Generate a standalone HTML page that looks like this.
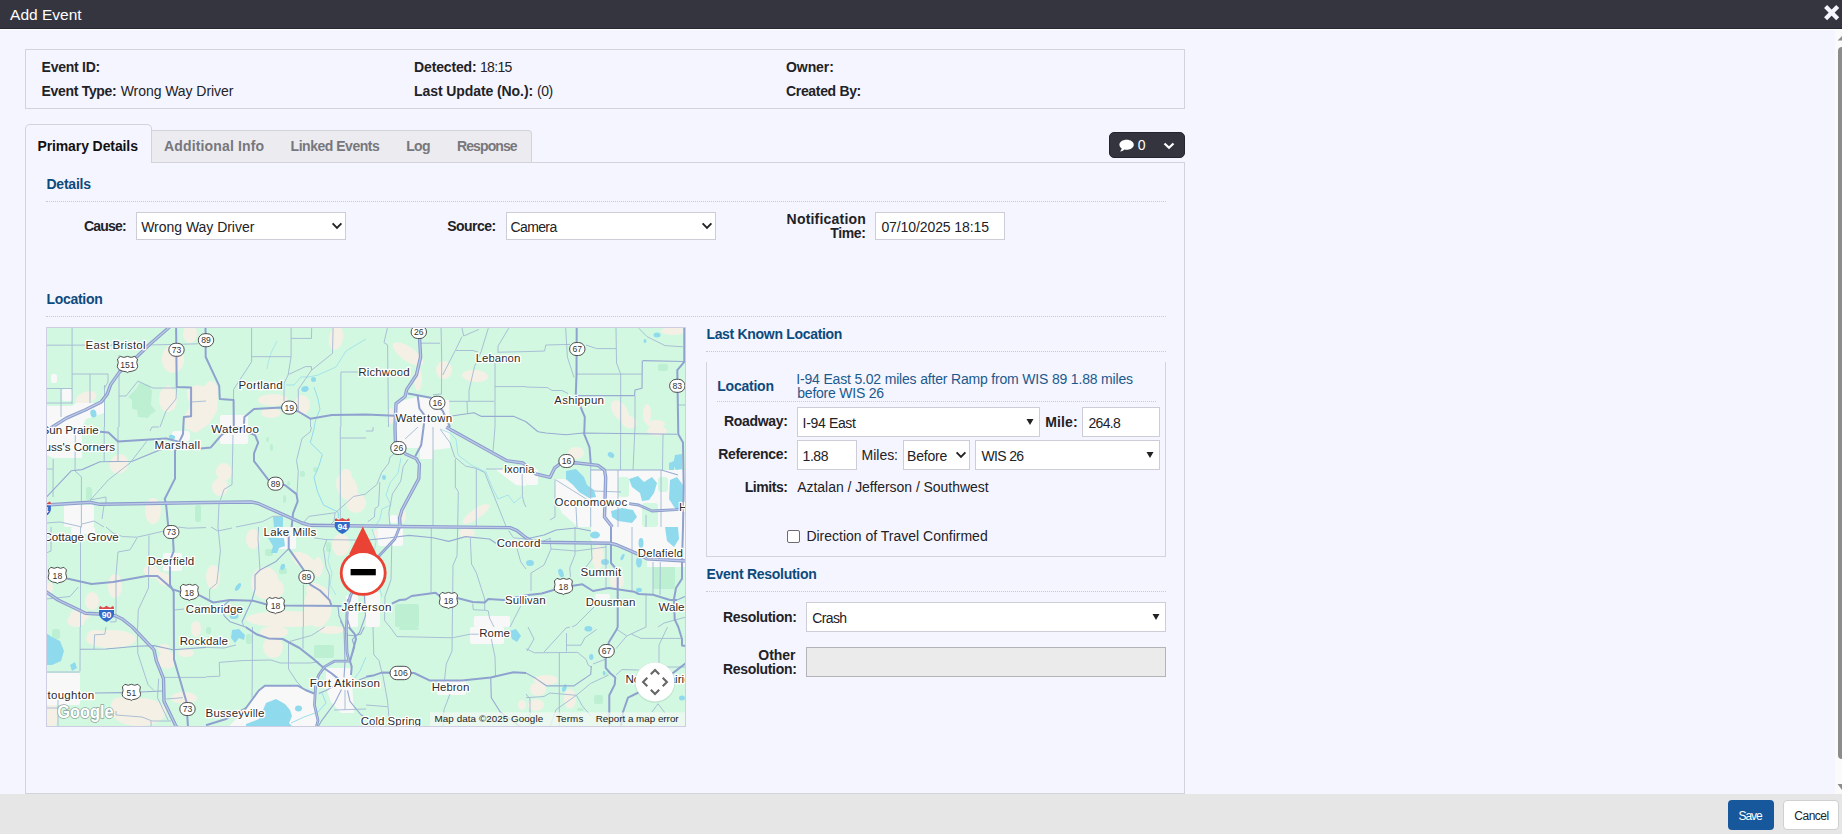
<!DOCTYPE html>
<html lang="en">
<head>
<meta charset="utf-8">
<title>Add Event</title>
<style>
html,body{margin:0;padding:0;}
body{width:1842px;height:834px;overflow:hidden;background:#f5f5ff;position:relative;
 font-family:"Liberation Sans",Arial,sans-serif;font-size:14px;color:#222226;}
*{box-sizing:border-box;}
.abs{position:absolute;}
.t{position:absolute;white-space:nowrap;line-height:16px;font-size:14px;}
.b{font-weight:bold;}
.blue{color:#0d4a7c;}
.blue2{color:#1b5a8c;}
#hdr{left:0;top:0;width:1842px;height:29px;background:#35353f;border-bottom:1px solid #282832;}
#hdrw{left:0;top:29px;width:1842px;height:1px;background:#fff;}
#title{left:10px;top:4px;font-size:16px;line-height:20px;color:#fff;}
#info{left:25px;top:49px;width:1160px;height:60px;border:1px solid #d3d3dc;}
#panel{left:25px;top:162px;width:1160px;height:632px;border:1px solid #d3d3dc;}
#tabbar{left:151px;top:130px;width:381px;height:33px;background:#ebebf0;border:1px solid #d3d3dc;border-left:none;border-radius:0 4px 0 0;}
#tabact{left:25px;top:124px;width:127px;height:39px;background:#f5f5ff;border:1px solid #d3d3dc;border-bottom:none;border-radius:5px 5px 0 0;}
.tab{color:#77777c;font-weight:bold;}
.dot{position:absolute;height:0;border-top:1px dotted #c9c9d2;}
.sel,.inp{position:absolute;background:#fff;border:1px solid #cdcdd8;}
#cbtn{left:1109px;top:132px;width:76px;height:26px;background:#34343e;border:1px solid #24242c;border-radius:5px;}
#foot{left:0;top:794px;width:1842px;height:40px;background:#e6e6e6;}
#save{left:1728px;top:800px;width:46px;height:30px;background:#17589d;border-radius:4px;}
#cancel{left:1783px;top:800px;width:56px;height:30px;background:#fff;border:1px solid #d0d0d0;border-radius:4px;}
#sbar{left:1835px;top:30px;width:7px;height:764px;background:#fafafa;}
#sthumb{left:1838px;top:47px;width:8px;height:712px;background:#8c8c8c;border-radius:4px;}
#map{left:46px;top:327px;width:640px;height:400px;overflow:hidden;background:#d3f8e2;}
#lbox{left:706px;top:362px;width:460px;height:195px;border:1px solid #d3d3dc;border-top:none;}
</style>
</head>
<body>
<div id="hdr" class="abs"></div><div id="hdrw" class="abs"></div>
<svg class="abs" style="left:1824px;top:4.6px" width="16" height="16" viewBox="0 0 16 16"><path d="M1.6 1.6 L13.7 13.7 M13.7 1.6 L1.6 13.7" stroke="#f5f5ff" stroke-width="4.3" stroke-linecap="butt"/></svg>

<div id="sbar" class="abs"></div><div id="sthumb" class="abs"></div>
<svg class="abs" style="left:1835px;top:30px" width="7" height="16" viewBox="0 0 7 16"><path d="M2.6 10.6 L7 6 L7 10.6 Z" fill="#8c8c8c"/></svg>
<svg class="abs" style="left:1835px;top:778px" width="7" height="16" viewBox="0 0 7 16"><path d="M2.6 6 L7 6 L7 12 Z" fill="#8c8c8c"/></svg>

<div id="info" class="abs"></div>

<div id="panel" class="abs"></div>
<div id="tabbar" class="abs"></div>
<div id="tabact" class="abs"></div>

<div id="cbtn" class="abs"></div>
<svg class="abs" style="left:1118px;top:139px" width="17" height="14" viewBox="0 0 17 14"><path d="M8.6 0.8 C4.5 0.8 1.4 3 1.4 5.8 C1.4 7.3 2.3 8.6 3.7 9.5 C3.5 10.6 2.8 11.7 1.8 12.6 C3.7 12.5 5.3 11.8 6.4 10.6 C7.1 10.7 7.8 10.8 8.6 10.8 C12.7 10.8 15.8 8.6 15.8 5.8 C15.8 3 12.7 0.8 8.6 0.8 Z" fill="#fff"/></svg>
<svg class="abs" style="left:1163px;top:142px" width="12" height="8" viewBox="0 0 12 8"><path d="M1.5 1.5 L6 5.8 L10.5 1.5" fill="none" stroke="#fff" stroke-width="2.2"/></svg>

<div class="dot" style="left:46px;top:201px;width:1120px"></div>

<div class="sel" style="left:136px;top:212px;width:210px;height:28px"></div>
<svg class="abs chev" style="left:331px;top:222px" width="12" height="8" viewBox="0 0 12 8"><path d="M1.6 1.4 L6 5.8 L10.4 1.4" fill="none" stroke="#222" stroke-width="1.9"/></svg>

<div class="sel" style="left:506px;top:212px;width:210px;height:28px"></div>
<svg class="abs chev" style="left:701px;top:222px" width="12" height="8" viewBox="0 0 12 8"><path d="M1.6 1.4 L6 5.8 L10.4 1.4" fill="none" stroke="#222" stroke-width="1.9"/></svg>

<div class="inp" style="left:875px;top:212px;width:130px;height:28px"></div>

<div class="dot" style="left:46px;top:316px;width:1120px"></div>

<div id="map" class="abs"><svg width="640" height="400" viewBox="0 0 640 400" style="position:absolute;left:0;top:0;font-family:'Liberation Sans',Arial,sans-serif">
<rect width="640" height="400" fill="#d3f8e2"/>
<ellipse cx="127" cy="32" rx="11" ry="14" fill="#f4f0e5"/>
<ellipse cx="122" cy="72" rx="9" ry="13" fill="#f4f0e5"/>
<ellipse cx="40" cy="71" rx="11" ry="6" fill="#f4f0e5" transform="rotate(-20 40 71)"/>
<ellipse cx="144" cy="7" rx="7" ry="9" fill="#f4f0e5"/>
<ellipse cx="290" cy="11" rx="7" ry="12" fill="#f4f0e5" transform="rotate(10 290 11)"/>
<ellipse cx="227" cy="73" rx="15" ry="6" fill="#f4f0e5"/>
<ellipse cx="256" cy="78" rx="8" ry="10" fill="#f4f0e5"/>
<ellipse cx="165" cy="64" rx="7" ry="10" fill="#f4f0e5"/>
<ellipse cx="225" cy="86" rx="10" ry="5" fill="#f4f0e5"/>
<ellipse cx="362" cy="27" rx="18" ry="7" fill="#f4f0e5" transform="rotate(35 362 27)"/>
<ellipse cx="372" cy="52" rx="4" ry="12" fill="#f4f0e5"/>
<ellipse cx="398" cy="43" rx="8" ry="9" fill="#f4f0e5"/>
<ellipse cx="429" cy="49" rx="13" ry="6" fill="#f4f0e5" transform="rotate(5 429 49)"/>
<ellipse cx="345" cy="89" rx="3" ry="8" fill="#f4f0e5"/>
<ellipse cx="574" cy="84" rx="7" ry="12" fill="#f4f0e5" transform="rotate(-35 574 84)"/>
<ellipse cx="583" cy="95" rx="8" ry="6" fill="#f4f0e5" transform="rotate(20 583 95)"/>
<ellipse cx="601" cy="87" rx="4" ry="10" fill="#f4f0e5"/>
<ellipse cx="610" cy="97" rx="9" ry="4" fill="#f4f0e5"/>
<ellipse cx="627" cy="4" rx="12" ry="4" fill="#f4f0e5"/>
<ellipse cx="73" cy="137" rx="9" ry="10" fill="#f4f0e5" transform="rotate(30 73 137)"/>
<ellipse cx="107" cy="184" rx="8" ry="13" fill="#f4f0e5"/>
<ellipse cx="178" cy="145" rx="8" ry="9" fill="#f4f0e5"/>
<ellipse cx="174" cy="160" rx="8" ry="9" fill="#f4f0e5"/>
<ellipse cx="301" cy="160" rx="10" ry="14" fill="#f4f0e5" transform="rotate(-25 301 160)"/>
<ellipse cx="310" cy="176" rx="10" ry="10" fill="#f4f0e5"/>
<ellipse cx="300" cy="150" rx="6" ry="8" fill="#f4f0e5"/>
<ellipse cx="430" cy="187" rx="16" ry="5" fill="#f4f0e5" transform="rotate(-35 430 187)"/>
<ellipse cx="356" cy="189" rx="4" ry="7" fill="#f4f0e5"/>
<ellipse cx="530" cy="126" rx="8" ry="6" fill="#f4f0e5"/>
<ellipse cx="611" cy="104" rx="10" ry="5" fill="#f4f0e5"/>
<ellipse cx="69" cy="259" rx="7" ry="12" fill="#f4f0e5"/>
<ellipse cx="106" cy="245" rx="9" ry="6" fill="#f4f0e5" transform="rotate(20 106 245)"/>
<ellipse cx="118" cy="252" rx="8" ry="6" fill="#f4f0e5" transform="rotate(40 118 252)"/>
<ellipse cx="46" cy="274" rx="7" ry="9" fill="#f4f0e5"/>
<ellipse cx="34" cy="288" rx="10" ry="6" fill="#f4f0e5"/>
<ellipse cx="30" cy="294" rx="9" ry="6" fill="#f4f0e5"/>
<ellipse cx="4" cy="261" rx="3" ry="6" fill="#f4f0e5"/>
<ellipse cx="219" cy="256" rx="14" ry="16" fill="#f4f0e5"/>
<ellipse cx="228" cy="262" rx="10" ry="10" fill="#f4f0e5"/>
<ellipse cx="207" cy="212" rx="7" ry="10" fill="#f4f0e5"/>
<ellipse cx="258" cy="234" rx="14" ry="7" fill="#f4f0e5" transform="rotate(30 258 234)"/>
<ellipse cx="272" cy="240" rx="5" ry="10" fill="#f4f0e5"/>
<ellipse cx="167" cy="250" rx="7" ry="12" fill="#f4f0e5"/>
<ellipse cx="272" cy="279" rx="14" ry="21" fill="#f4f0e5"/>
<ellipse cx="240" cy="292" rx="40" ry="8" fill="#f4f0e5"/>
<ellipse cx="295" cy="218" rx="9" ry="11" fill="#f4f0e5"/>
<ellipse cx="268" cy="262" rx="8" ry="6" fill="#f4f0e5"/>
<ellipse cx="421" cy="206" rx="8" ry="5" fill="#f4f0e5"/>
<ellipse cx="332" cy="207" rx="5" ry="5" fill="#f4f0e5"/>
<ellipse cx="552" cy="230" rx="6" ry="12" fill="#f4f0e5"/>
<ellipse cx="571" cy="254" rx="7" ry="8" fill="#f4f0e5"/>
<ellipse cx="583" cy="212" rx="5" ry="10" fill="#f4f0e5"/>
<ellipse cx="65" cy="312" rx="25" ry="9" fill="#f4f0e5"/>
<ellipse cx="50" cy="308" rx="9" ry="5" fill="#f4f0e5"/>
<ellipse cx="121" cy="333" rx="9" ry="9" fill="#f4f0e5"/>
<ellipse cx="118" cy="322" rx="6" ry="5" fill="#f4f0e5"/>
<ellipse cx="93" cy="385" rx="27" ry="14" fill="#f4f0e5"/>
<ellipse cx="75" cy="378" rx="10" ry="8" fill="#f4f0e5"/>
<ellipse cx="138" cy="371" rx="13" ry="6" fill="#f4f0e5"/>
<ellipse cx="6" cy="388" rx="6" ry="13" fill="#f4f0e5"/>
<ellipse cx="228" cy="305" rx="14" ry="6" fill="#f4f0e5"/>
<ellipse cx="227" cy="320" rx="10" ry="11" fill="#f4f0e5"/>
<ellipse cx="285" cy="303" rx="13" ry="4" fill="#f4f0e5"/>
<ellipse cx="500" cy="353" rx="12" ry="5" fill="#f4f0e5"/>
<ellipse cx="492" cy="362" rx="8" ry="7" fill="#f4f0e5"/>
<ellipse cx="524" cy="372" rx="6" ry="10" fill="#f4f0e5"/>
<ellipse cx="490" cy="378" rx="8" ry="6" fill="#f4f0e5"/>
<ellipse cx="476" cy="378" rx="4" ry="5" fill="#f4f0e5"/>
<ellipse cx="150" cy="302" rx="5" ry="8" fill="#f4f0e5"/>
<ellipse cx="140" cy="326" rx="8" ry="4" fill="#f4f0e5"/>
<path d="M141.0 63.0 L150.0 58.0 L164.0 60.0 L172.0 68.0 L171.0 84.0 L163.0 97.0 L150.0 106.0 L139.0 101.0 L138.0 90.0 L145.0 78.0 L141.0 70.0 Z" fill="#f4f0e5"/>
<path d="M82.0 70.0 L90.0 62.0 L94.0 55.0 L103.0 58.0 L106.0 64.0 L105.0 78.0 L110.0 84.0 L104.0 88.0 L102.0 91.0 L92.0 90.0 L91.0 83.0 L86.0 82.0 L86.0 73.0 Z" fill="#bdf0d3"/>
<rect x="40" y="160" width="6" height="13" rx="2" fill="#bdf0d3"/>
<rect x="149" y="178" width="6" height="17" rx="2" fill="#bdf0d3"/>
<rect x="220" y="110" width="3" height="5" rx="2" fill="#bdf0d3"/>
<rect x="224" y="117" width="3" height="7" rx="2" fill="#bdf0d3"/>
<rect x="254" y="144" width="5" height="6" rx="2" fill="#bdf0d3"/>
<rect x="267" y="140" width="5" height="5" rx="2" fill="#bdf0d3"/>
<rect x="241" y="154" width="3" height="5" rx="2" fill="#bdf0d3"/>
<rect x="237" y="168" width="3" height="8" rx="2" fill="#bdf0d3"/>
<rect x="612" y="37" width="10" height="7" rx="2" fill="#bdf0d3"/>
<rect x="605" y="170" width="7" height="10" rx="2" fill="#bdf0d3"/>
<rect x="566" y="165" width="5" height="5" rx="2" fill="#bdf0d3"/>
<rect x="219" y="222" width="8" height="7" rx="2" fill="#bdf0d3"/>
<rect x="233" y="241" width="8" height="6" rx="2" fill="#bdf0d3"/>
<rect x="280" y="215" width="5" height="10" rx="2" fill="#bdf0d3"/>
<rect x="349" y="277" width="24" height="23" rx="2" fill="#bdf0d3"/>
<rect x="607" y="234" width="22" height="28" rx="2" fill="#bdf0d3"/>
<rect x="268" y="318" width="20" height="13" rx="2" fill="#bdf0d3"/>
<rect x="200" y="307" width="6" height="10" rx="2" fill="#bdf0d3"/>
<rect x="160" y="300" width="5" height="7" rx="2" fill="#bdf0d3"/>
<rect x="548" y="368" width="9" height="9" rx="2" fill="#bdf0d3"/>
<rect x="531" y="381" width="7" height="3" rx="2" fill="#bdf0d3"/>
<rect x="557" y="345" width="5" height="4" rx="2" fill="#bdf0d3"/>
<rect x="6" y="302" width="8" height="10" rx="2" fill="#bdf0d3"/>
<rect x="360" y="73" width="7" height="4" rx="2" fill="#bdf0d3"/>
<rect x="353" y="300" width="20" height="3" rx="2" fill="#bdf0d3"/>
<path d="M0.0 79.0 L26.0 79.0 L30.0 76.0 L58.0 76.0 L58.0 86.0 L40.0 92.0 L36.0 100.0 L36.0 131.0 L8.0 131.0 L0.0 128.0 Z" fill="#f8f8f8"/>
<rect x="5" y="47" width="6" height="9" rx="2" fill="#f8f8f8"/>
<rect x="16" y="62" width="10" height="12" rx="2" fill="#f8f8f8"/>
<rect x="174" y="88" width="28" height="29" rx="2" fill="#f8f8f8"/>
<rect x="126" y="104" width="18" height="10" rx="3" fill="#f8f8f8"/>
<path d="M349.0 76.0 L370.0 70.0 L403.0 73.0 L404.0 121.0 L387.0 123.0 L387.0 132.0 L374.0 132.0 L374.0 121.0 L354.0 121.0 L349.0 110.0 Z" fill="#f8f8f8"/>
<path d="M449.0 142.0 L480.0 142.0 L480.0 159.0 L470.0 158.0 Z" fill="#f8f8f8"/>
<rect x="480" y="142" width="12" height="16" rx="2" fill="#f8f8f8"/>
<path d="M545.0 143.0 L640.0 143.0 L640.0 200.0 L545.0 200.0 Z" fill="#f8f8f8"/>
<path d="M509.0 152.0 L519.0 152.0 L545.0 170.0 L545.0 200.0 L532.0 200.0 L516.0 186.0 L509.0 172.0 Z" fill="#f8f8f8"/>
<path d="M545.0 200.0 L640.0 200.0 L640.0 240.0 L601.0 240.0 L601.0 232.0 L590.0 226.0 L572.0 218.0 L560.0 216.0 L545.0 214.0 Z" fill="#f8f8f8"/>
<rect x="18" y="178" width="30" height="22" rx="2" fill="#f8f8f8"/>
<rect x="25" y="200" width="24" height="7" rx="2" fill="#f8f8f8"/>
<rect x="117" y="226" width="19" height="18" rx="2" fill="#f8f8f8"/>
<rect x="332" y="201" width="25" height="18" rx="2" fill="#f8f8f8"/>
<rect x="320" y="265" width="14" height="35" rx="2" fill="#f8f8f8"/>
<rect x="428" y="289" width="36" height="11" rx="2" fill="#f8f8f8"/>
<rect x="424" y="300" width="34" height="17" rx="2" fill="#f8f8f8"/>
<rect x="391" y="354" width="29" height="14" rx="2" fill="#f8f8f8"/>
<rect x="0" y="346" width="34" height="32" rx="2" fill="#f8f8f8"/>
<path d="M219.0 359.0 L252.0 359.0 L268.0 367.0 L272.0 400.0 L182.0 400.0 L200.0 383.0 L213.0 364.0 Z" fill="#f8f8f8"/>
<path d="M280.0 341.0 L305.0 341.0 L308.0 386.0 L295.0 386.0 L285.0 375.0 L280.0 360.0 Z" fill="#f8f8f8"/>
<rect x="549" y="267" width="15" height="5" rx="2" fill="#f8f8f8"/>
<rect x="232" y="200" width="18" height="22" rx="2" fill="#f8f8f8"/>
<rect x="300" y="268" width="12" height="32" rx="2" fill="#f8f8f8"/>
<rect x="344" y="188" width="7" height="8" rx="2" fill="#f8f8f8"/>
<rect x="572" y="150" width="11" height="20" rx="3" fill="#d3f8e2"/>
<rect x="596" y="176" width="16" height="24" rx="3" fill="#d3f8e2"/>
<rect x="612" y="150" width="10" height="15" rx="3" fill="#d3f8e2"/>
<path d="M520.0 144.0 L530.0 142.0 L538.0 150.0 L541.0 158.0 L548.0 163.0 L550.0 170.0 L543.0 171.0 L533.0 165.0 L527.0 158.0 L520.0 152.0 Z" fill="#90daee"/>
<path d="M583.0 152.0 L592.0 149.0 L598.0 155.0 L606.0 150.0 L611.0 156.0 L608.0 166.0 L603.0 173.0 L596.0 174.0 L594.0 166.0 L586.0 160.0 Z" fill="#90daee"/>
<path d="M629.0 128.0 L636.0 127.0 L636.0 142.0 L630.0 143.0 L627.0 138.0 Z" fill="#90daee"/>
<path d="M623.0 136.0 L628.0 134.0 L628.0 143.0 L623.0 143.0 Z" fill="#90daee"/>
<path d="M624.0 153.0 L631.0 150.0 L637.0 158.0 L637.0 178.0 L630.0 183.0 L623.0 172.0 Z" fill="#90daee"/>
<path d="M565.0 184.0 L576.0 181.0 L587.0 183.0 L591.0 190.0 L586.0 196.0 L572.0 194.0 L566.0 190.0 Z" fill="#90daee"/>
<ellipse cx="565" cy="128" rx="3.5" ry="2.5" fill="#90daee" transform="rotate(30 565 128)"/>
<ellipse cx="611" cy="8" rx="3.5" ry="2.5" fill="#90daee"/>
<ellipse cx="599" cy="14" rx="1.5" ry="2" fill="#90daee"/>
<path d="M619.0 200.0 L632.0 200.0 L633.0 212.0 L628.0 220.0 L621.0 214.0 Z" fill="#90daee"/>
<ellipse cx="549" cy="208" rx="5" ry="3.5" fill="#90daee"/>
<ellipse cx="595" cy="216" rx="2.5" ry="5" fill="#90daee"/>
<ellipse cx="593" cy="235" rx="3" ry="5.5" fill="#90daee"/>
<ellipse cx="559" cy="235" rx="4" ry="3" fill="#90daee"/>
<ellipse cx="576.5" cy="230" rx="1.5" ry="3.5" fill="#90daee" transform="rotate(25 576.5 230)"/>
<ellipse cx="484" cy="236" rx="4" ry="3" fill="#90daee"/>
<ellipse cx="515" cy="246" rx="2.5" ry="4.5" fill="#90daee" transform="rotate(-20 515 246)"/>
<ellipse cx="593" cy="263" rx="3" ry="2.2" fill="#90daee"/>
<path d="M222.0 211.0 L238.0 211.0 L239.0 219.0 L233.0 221.0 L231.0 226.0 L225.0 226.0 L227.0 219.0 Z" fill="#90daee"/>
<path d="M227.0 190.0 L237.0 190.0 L237.0 200.0 L228.0 200.0 Z" fill="#90daee"/>
<ellipse cx="236.7" cy="240" rx="2.3" ry="3.2" fill="#90daee" transform="rotate(20 236.7 240)"/>
<ellipse cx="192" cy="260" rx="2" ry="4.5" fill="#90daee" transform="rotate(35 192 260)"/>
<ellipse cx="188" cy="289" rx="4.5" ry="3" fill="#90daee"/>
<ellipse cx="47.4" cy="86.5" rx="3" ry="4" fill="#90daee" transform="rotate(-15 47.4 86.5)"/>
<ellipse cx="126" cy="110" rx="3.2" ry="2" fill="#90daee" transform="rotate(20 126 110)"/>
<ellipse cx="259" cy="62" rx="3.8" ry="2.8" fill="#90daee" transform="rotate(-20 259 62)"/>
<ellipse cx="267.5" cy="52.5" rx="2.5" ry="2.5" fill="#90daee"/>
<ellipse cx="338" cy="150.5" rx="2" ry="2.4" fill="#90daee"/>
<path d="M0.0 306.0 L6.0 310.0 L14.0 314.0 L18.0 324.0 L15.0 334.0 L6.0 338.0 L0.0 338.0 Z" fill="#90daee"/>
<path d="M24.0 338.0 L29.0 335.0 L31.0 341.0 L26.0 344.0 Z" fill="#90daee"/>
<path d="M220.0 376.0 L230.0 372.0 L239.0 377.0 L244.0 383.0 L246.0 389.0 L243.0 396.0 L247.0 400.0 L200.0 400.0 L200.0 397.0 L213.0 392.0 L217.0 383.0 Z" fill="#90daee"/>
<ellipse cx="252.5" cy="381.5" rx="3.5" ry="3" fill="#90daee"/>
<path d="M186.0 303.0 L193.0 302.0 L199.0 308.0 L198.0 313.0 L193.0 311.0 L189.0 316.0 L185.0 311.0 Z" fill="#90daee"/>
<path d="M463.0 304.0 L470.0 302.0 L475.0 309.0 L471.0 315.0 L466.0 312.0 Z" fill="#90daee"/>
<ellipse cx="542.4" cy="301.8" rx="4" ry="2.8" fill="#90daee"/>
<ellipse cx="545.3" cy="330" rx="2.2" ry="3" fill="#90daee"/>
<ellipse cx="518.4" cy="361" rx="2" ry="4" fill="#90daee" transform="rotate(20 518.4 361)"/>
<ellipse cx="636" cy="371" rx="3" ry="2.5" fill="#90daee"/>
<ellipse cx="558" cy="346" rx="1.3" ry="2.2" fill="#90daee"/>
<path d="M268.5 100.0 L264.3 115.6 L276.3 127.6 L272.7 139.6 L268.0 150.4 L271.5 164.7 L277.5 178.0 L292.0 185.0 L292.5 191.0" fill="none" stroke="#90daee" stroke-width="1" stroke-linejoin="round"/>
<path d="M320.0 12.0 L300.0 24.0 L290.0 40.0 L272.0 48.0 L263.0 50.0 L255.0 50.0 L248.0 58.0 L240.0 58.0" fill="none" stroke="#90daee" stroke-width="0.7" stroke-linejoin="round"/>
<path d="M268.0 60.0 L272.0 72.0 L274.0 82.0 L270.0 92.0 L268.0 100.0" fill="none" stroke="#90daee" stroke-width="0.9" stroke-linejoin="round"/>
<path d="M231.0 14.0 L225.0 26.0 L222.0 36.0 L221.0 42.0" fill="none" stroke="#90daee" stroke-width="0.6" stroke-linejoin="round"/>
<path d="M394.0 102.0 L404.0 106.0 L410.0 112.0 L412.0 128.0 L425.0 138.0 L440.0 145.0 L446.0 160.0 L452.0 172.0 L462.0 168.0 L468.0 176.0 L475.0 170.0" fill="none" stroke="#90daee" stroke-width="0.7" stroke-linejoin="round"/>
<path d="M355.0 131.0 L352.0 146.0 L344.0 156.0 L340.0 168.0 L345.0 178.0 L336.0 182.0 L334.0 192.0 L330.0 198.0" fill="none" stroke="#90daee" stroke-width="0.7" stroke-linejoin="round"/>
<path d="M326.0 202.0 L330.0 214.0 L328.0 226.0 L324.0 240.0 L332.0 255.0 L336.0 270.0" fill="none" stroke="#90daee" stroke-width="0.7" stroke-linejoin="round"/>
<path d="M284.0 222.0 L282.0 234.0 L286.0 246.0 L284.0 258.0 L290.0 268.0" fill="none" stroke="#90daee" stroke-width="0.6" stroke-linejoin="round"/>
<path d="M320.0 330.0 L314.0 344.0 L308.0 352.0 L300.0 358.0" fill="none" stroke="#90daee" stroke-width="0.8" stroke-linejoin="round"/>
<path d="M276.0 366.0 L280.0 376.0 L272.0 385.0 L258.0 390.0 L245.0 396.0" fill="none" stroke="#90daee" stroke-width="0.9" stroke-linejoin="round"/>
<style>path.mn{fill:none;stroke:#a3b9d2;stroke-width:.9;stroke-linejoin:round}path.md{fill:none;stroke:#98abd1;stroke-width:1.15;stroke-linejoin:round}path.hw{fill:none;stroke:#8fa1ce;stroke-width:2;stroke-linejoin:round}path.fwo{fill:none;stroke:#8b9dcc;stroke-width:3.4;stroke-linejoin:round}path.f2o{fill:none;stroke:#8b9dcc;stroke-width:2.8;stroke-linejoin:round}path.f2i{fill:none;stroke:#bcc8e7;stroke-width:.9;stroke-linejoin:round}path.fwi{fill:none;stroke:#bcc8e7;stroke-width:1.3;stroke-linejoin:round}text.lb{font-size:11.6px;fill:#2b2b2b;stroke:#fff;stroke-width:2.6px;stroke-linejoin:round;paint-order:stroke fill}text.sh{font-size:8.6px;fill:#333;text-anchor:middle}</style>
<path d="M0.0 18.2 L100.0 18.0 L130.0 17.4 L152.0 16.8" class="mn"/>
<path d="M26.1 0.0 L26.1 77.0" class="mn"/>
<path d="M26.0 47.0 L62.0 47.0 L62.0 55.0 L58.0 62.0" class="mn"/>
<path d="M44.0 47.0 L44.0 76.0" class="mn"/>
<path d="M0.0 61.5 L26.0 61.5" class="mn"/>
<path d="M15.0 61.5 L15.0 90.0" class="mn"/>
<path d="M0.0 76.0 L26.0 76.0" class="mn"/>
<path d="M73.0 28.0 L73.0 100.0" class="mn"/>
<path d="M58.5 58.0 L58.5 100.0" class="mn"/>
<path d="M73.0 69.0 L80.0 69.0 L92.0 54.0 L100.0 58.0 L107.0 61.0 L130.0 61.0" class="mn"/>
<path d="M130.7 60.0 L130.0 72.0 L120.0 84.0 L114.0 100.0" class="mn"/>
<path d="M145.0 75.0 L160.0 74.0" class="mn"/>
<path d="M205.6 0.0 L205.6 34.8 L187.6 62.4 L187.5 72.0" class="mn"/>
<path d="M205.6 29.7 L245.0 29.7" class="mn"/>
<path d="M245.1 0.0 L245.1 29.7 L242.1 48.0 L238.0 56.4 L238.0 74.3" class="mn"/>
<path d="M245.1 11.4 L265.5 11.4 L265.7 0.0" class="mn"/>
<path d="M287.1 0.0 L286.5 26.4 L265.5 43.2 L252.3 62.4 L252.3 84.0" class="mn"/>
<path d="M242.7 47.4 L259.5 39.6 L265.5 39.6 L265.5 43.2" class="mn"/>
<path d="M294.9 100.0 L294.9 45.0 L320.0 45.0" class="mn"/>
<path d="M264.5 92.0 L264.5 100.0" class="mn"/>
<path d="M341.6 0.0 L338.0 15.6 L341.6 18.0 L342.5 100.0" class="mn"/>
<path d="M395.0 0.0 L395.7 30.0 L395.5 67.0 L387.0 67.7" class="mn"/>
<path d="M374.0 16.2 L394.0 16.2" class="mn"/>
<path d="M442.3 1.2 L435.0 25.0 L428.5 39.6 L423.0 63.5 L423.0 74.3" class="mn"/>
<path d="M416.0 9.6 L410.0 22.0 L396.7 48.0" class="mn"/>
<path d="M410.0 23.5 L427.0 23.5 L432.0 25.0" class="mn"/>
<path d="M403.0 74.3 L448.0 74.3" class="mn"/>
<path d="M449.0 100.0 L449.0 36.0 L450.0 30.0" class="mn"/>
<path d="M449.0 59.6 L480.0 59.6" class="mn"/>
<path d="M421.0 74.3 L421.5 86.5" class="mn"/>
<path d="M462.7 1.2 L452.0 19.2 L452.0 25.8" class="mn"/>
<path d="M452.0 25.2 L480.0 24.6" class="mn"/>
<path d="M416.0 1.0 L417.7 9.0 L432.7 2.4" class="mn"/>
<path d="M480.0 24.6 L498.6 24.0 L499.8 18.0 L524.0 17.4" class="mn"/>
<path d="M540.0 18.0 L550.7 21.6 L570.0 21.6" class="mn"/>
<path d="M480.0 60.0 L501.6 60.6 L506.0 63.5 L516.0 63.5 L522.0 66.5" class="mn"/>
<path d="M519.6 0.0 L521.4 30.0 L528.0 50.4" class="mn"/>
<path d="M531.0 47.1 L596.0 47.1" class="mn"/>
<path d="M574.7 47.0 L574.7 100.0" class="mn"/>
<path d="M570.0 1.0 L570.5 36.0 L574.7 47.0" class="mn"/>
<path d="M589.0 68.6 L589.0 100.0" class="mn"/>
<path d="M592.7 1.2 L601.0 9.6 L619.0 18.6 L637.0 19.8" class="mn"/>
<path d="M632.0 78.0 L640.0 78.0" class="mn"/>
<path d="M44.4 173.0 L62.4 152.8 L84.0 136.0 L100.7 114.4" class="mn"/>
<path d="M29.4 100.0 L29.0 144.0 L35.4 149.8 L35.4 200.0" class="mn"/>
<path d="M72.0 100.0 L72.0 134.0" class="mn"/>
<path d="M58.2 100.0 L58.2 134.0" class="mn"/>
<path d="M7.2 132.0 L7.0 170.0" class="mn"/>
<path d="M0.0 142.0 L7.0 142.0" class="mn"/>
<path d="M104.0 104.0 L106.0 100.0 L113.0 100.0" class="mn"/>
<path d="M44.0 173.0 L60.0 170.0 L60.0 178.0" class="mn"/>
<path d="M0.0 196.0 L14.0 195.0 L36.0 200.0" class="mn"/>
<path d="M36.0 197.0 L48.0 194.0 L58.0 200.0" class="mn"/>
<path d="M58.0 178.0 L56.0 192.0" class="mn"/>
<path d="M187.0 108.0 L186.0 157.6 L178.0 162.4 L174.4 173.0" class="mn"/>
<path d="M294.3 100.0 L294.3 195.0" class="mn"/>
<path d="M294.3 111.0 L320.0 111.0" class="mn"/>
<path d="M265.5 100.0 L264.3 104.8 L256.0 111.4 L250.5 133.6 L252.3 144.4 L251.0 167.0" class="mn"/>
<path d="M258.3 194.7 L263.0 189.3 L289.5 185.7 L307.5 169.5 L320.0 167.0" class="mn"/>
<path d="M172.0 200.0 L173.0 176.7" class="mn"/>
<path d="M190.0 200.0 L216.4 194.7 L227.0 189.3 L236.7 189.3" class="mn"/>
<path d="M289.0 186.0 L288.0 194.0 L284.0 198.0" class="mn"/>
<path d="M387.0 100.0 L387.0 200.0" class="mn"/>
<path d="M409.3 131.8 L409.3 160.0 L412.3 164.7 L411.7 200.0" class="mn"/>
<path d="M430.3 142.0 L430.3 200.0" class="mn"/>
<path d="M394.3 102.4 L404.0 115.6 L408.7 130.0 L419.5 139.0 L430.3 141.4 L438.7 145.6 L460.3 200.0" class="mn"/>
<path d="M440.0 142.0 L456.7 142.0" class="mn"/>
<path d="M449.0 100.0 L447.0 124.0" class="mn"/>
<path d="M320.0 166.5 L330.8 157.6 L335.6 145.6 L342.8 136.0 L344.0 130.0 L348.0 127.0" class="mn"/>
<path d="M362.0 132.4 L357.2 139.6 L354.8 154.0 L346.4 167.0 L342.8 186.3 L344.0 198.3" class="mn"/>
<path d="M333.8 155.0 L332.6 179.0 L329.0 181.5 L328.4 190.0 L321.8 194.7" class="mn"/>
<path d="M320.0 104.0 L327.0 104.0 L327.0 100.0" class="mn"/>
<path d="M359.0 112.0 L372.0 100.0" class="mn"/>
<path d="M476.0 168.0 L478.0 176.0 L480.0 180.0" class="mn"/>
<path d="M476.0 142.0 L476.5 168.0" class="mn"/>
<path d="M574.7 100.0 L574.5 143.0" class="mn"/>
<path d="M589.0 100.0 L587.0 143.0" class="mn"/>
<path d="M617.0 107.0 L616.5 143.0" class="mn"/>
<path d="M544.7 136.0 L544.7 200.0" class="mn"/>
<path d="M572.0 143.0 L572.0 200.0" class="mn"/>
<path d="M509.0 152.0 L509.0 190.0 L504.0 193.0" class="mn"/>
<path d="M510.0 153.0 L545.0 175.0" class="mn"/>
<path d="M548.0 164.0 L575.0 165.0" class="mn"/>
<path d="M615.0 143.0 L615.0 200.0" class="mn"/>
<path d="M600.0 188.0 L600.0 200.0" class="mn"/>
<path d="M530.0 180.0 L531.0 200.0" class="mn"/>
<path d="M34.5 200.0 L34.5 300.0" class="mn"/>
<path d="M60.0 200.0 L67.0 206.0 L76.7 209.6 L91.0 210.2 L117.5 204.2" class="mn"/>
<path d="M91.1 210.8 L84.0 222.8 L72.0 225.0 L70.0 248.0 L70.0 294.7 L64.0 295.0" class="mn"/>
<path d="M103.0 208.4 L102.5 261.0 L92.3 282.7 L91.7 300.0" class="mn"/>
<path d="M0.0 272.0 L24.0 269.5 L32.4 260.0" class="mn"/>
<path d="M132.0 200.0 L141.5 201.2 L160.0 200.6" class="mn"/>
<path d="M0.0 226.0 L5.0 224.0 L5.0 200.0" class="mn"/>
<path d="M128.0 283.0 L138.0 282.0" class="mn"/>
<path d="M212.5 200.0 L212.0 212.0 L214.0 243.0" class="mn"/>
<path d="M172.0 200.0 L174.4 224.0 L170.8 256.4 L163.6 262.4 L163.6 272.0" class="mn"/>
<path d="M257.4 257.6 L257.4 300.0" class="mn"/>
<path d="M281.0 212.0 L277.5 221.6 L280.0 239.6 L283.5 248.0 L282.3 272.0" class="mn"/>
<path d="M268.0 210.8 L280.0 212.6 L320.0 213.2" class="mn"/>
<path d="M165.0 200.0 L172.0 204.0 L186.0 201.0" class="mn"/>
<path d="M196.0 294.7 L198.0 300.0" class="mn"/>
<path d="M385.3 200.0 L385.0 265.4" class="mn"/>
<path d="M411.7 200.0 L411.0 228.8 L407.0 238.4 L406.3 300.0" class="mn"/>
<path d="M424.3 210.8 L425.5 237.0 L430.3 245.6 L438.7 272.0 L438.7 283.0 L442.3 284.0 L443.5 291.0 L448.0 300.0" class="mn"/>
<path d="M345.8 215.6 L345.0 252.8 L339.0 269.5 L338.6 293.5 L344.0 300.0" class="mn"/>
<path d="M471.0 221.6 L474.7 234.8 L480.0 242.0" class="mn"/>
<path d="M426.7 276.7 L427.3 282.7 L438.7 283.3" class="mn"/>
<path d="M462.7 203.6 L467.5 210.8 L480.0 212.0" class="mn"/>
<path d="M474.7 279.0 L464.0 300.0" class="mn"/>
<path d="M480.0 221.0 L505.0 211.0" class="mn"/>
<path d="M504.0 212.0 L505.0 222.0 L498.0 238.0 L485.0 246.0 L485.0 264.0" class="mn"/>
<path d="M529.0 200.0 L529.0 227.6 L523.8 240.8 L524.5 250.0" class="mn"/>
<path d="M586.0 200.0 L586.0 264.0" class="mn"/>
<path d="M600.0 268.0 L600.0 300.0" class="mn"/>
<path d="M607.0 235.0 L607.0 267.0" class="mn"/>
<path d="M614.3 235.0 L614.0 268.0" class="mn"/>
<path d="M505.0 222.0 L530.0 224.0 L560.0 220.0" class="mn"/>
<path d="M548.0 280.0 L530.0 298.0 L526.0 300.0" class="mn"/>
<path d="M640.0 290.0 L618.0 296.0 L612.0 300.0" class="mn"/>
<path d="M34.2 300.0 L34.0 344.4" class="mn"/>
<path d="M0.0 345.0 L33.6 345.0" class="mn"/>
<path d="M48.0 322.2 L48.6 307.8 L58.8 307.2 L60.0 300.0" class="mn"/>
<path d="M91.4 300.0 L91.8 326.4 L102.0 357.6 L108.0 363.6" class="mn"/>
<path d="M118.7 350.4 L160.0 350.4" class="mn"/>
<path d="M12.0 373.0 L12.0 400.0" class="mn"/>
<path d="M112.7 351.6 L111.5 370.7 L122.3 393.5" class="mn"/>
<path d="M120.0 372.0 L136.7 370.7" class="mn"/>
<path d="M70.0 384.0 L70.0 388.0 L96.0 390.0 L106.0 394.0 L125.0 394.0" class="mn"/>
<path d="M105.0 394.0 L105.0 400.0" class="mn"/>
<path d="M0.0 381.0 L12.0 381.0" class="mn"/>
<path d="M206.5 300.0 L206.2 358.8 L206.0 370.7" class="mn"/>
<path d="M160.0 349.8 L173.8 349.2 L173.2 335.4 L196.0 333.6 L224.7 333.0 L234.3 336.0 L264.3 336.0 L272.7 334.8" class="mn"/>
<path d="M242.5 315.6 L242.5 342.0 L251.0 355.0 L256.0 360.0" class="mn"/>
<path d="M257.0 300.0 L257.0 321.6" class="mn"/>
<path d="M244.0 314.4 L265.5 308.4 L278.7 300.0" class="mn"/>
<path d="M160.0 320.4 L178.0 321.0 L190.0 318.0" class="mn"/>
<path d="M299.0 363.0 L299.0 383.0" class="mn"/>
<path d="M288.0 383.0 L320.0 382.0" class="mn"/>
<path d="M327.0 300.0 L327.8 327.6 L333.0 333.6 L335.6 344.4 L336.8 348.0 L341.6 374.3 L342.8 388.7 L343.0 400.0" class="mn"/>
<path d="M344.0 300.0 L351.0 309.6 L406.3 310.8 L424.3 307.2 L432.7 307.2" class="mn"/>
<path d="M406.3 300.0 L406.0 324.0 L400.3 337.0 L398.5 352.8" class="mn"/>
<path d="M404.0 367.0 L398.0 382.7 L397.0 400.0" class="mn"/>
<path d="M445.3 312.0 L449.0 330.0 L449.5 349.0" class="mn"/>
<path d="M320.0 378.0 L341.6 379.7" class="mn"/>
<path d="M480.0 321.6 L488.4 325.8 L531.6 325.4 L540.0 332.4 L542.4 338.4 L546.0 340.0" class="mn"/>
<path d="M513.3 325.8 L513.3 400.0" class="mn"/>
<path d="M520.5 306.0 L520.5 324.6" class="mn"/>
<path d="M520.5 318.2 L535.0 318.2 L538.8 310.8 L550.7 302.4" class="mn"/>
<path d="M498.0 325.0 L520.0 301.0 L524.0 300.0" class="mn"/>
<path d="M480.0 370.7 L498.0 369.5 L504.0 366.0 L530.4 368.3 L544.7 356.4 L562.7 348.0" class="mn"/>
<path d="M504.0 400.0 L510.0 382.7 L530.4 368.3 L536.4 379.0 L544.7 388.7" class="mn"/>
<path d="M547.0 337.0 L559.0 332.4" class="mn"/>
<path d="M571.0 302.4 L580.7 309.0 L600.0 300.0" class="mn"/>
<path d="M580.7 309.0 L570.0 321.6" class="mn"/>
<path d="M585.5 307.2 L595.0 311.4 L636.0 311.4" class="mn"/>
<path d="M621.5 300.0 L613.0 318.0 L613.0 336.0" class="mn"/>
<path d="M576.0 342.6 L592.7 343.0" class="mn"/>
<path d="M576.0 342.6 L570.0 348.0" class="mn"/>
<path d="M612.0 376.7 L606.0 385.0" class="mn"/>
<path d="M612.0 376.7 L619.0 386.0" class="mn"/>
<path d="M482.0 300.0 L488.0 312.0 L481.0 324.0" class="mn"/>
<path d="M480.0 367.0 L484.0 372.0 L484.0 400.0" class="mn"/>
<path d="M613.0 340.0 L640.0 340.0" class="mn"/>
<path d="M560.0 216.0 L560.0 262.0" class="mn"/>
<path d="M545.0 214.0 L546.0 232.0 L540.0 240.0" class="mn"/>
<path d="M318.3 267.0 L319.5 288.7 L313.5 305.5 L306.3 312.7 L308.7 320.0 L303.9 334.3" class="md"/>
<path d="M294.3 293.5 L301.5 308.0 L310.0 309.0" class="md"/>
<path d="M404.0 89.3 L428.0 85.7 L435.0 89.3 L467.5 89.3 L480.0 94.7 L492.0 104.8" class="md"/>
<path d="M480.0 346.0 L490.0 351.6 L500.4 358.8 L528.0 358.8 L544.7 347.4 L545.3 339.0" class="md"/>
<path d="M0.0 170.7 L25.2 143.8 L36.0 142.6 L54.0 134.8 L86.3 134.2 L112.7 123.4 L127.0 120.0" class="md"/>
<path d="M492.0 104.8 L500.0 106.0 L520.0 107.8 L537.0 106.0 L631.0 107.2" class="md"/>
<path d="M544.7 143.0 L615.5 143.0 L632.0 148.0" class="md"/>
<path d="M320.0 213.2 L344.0 210.8 L363.0 208.4 L387.0 210.8 L402.7 214.4 L419.5 209.6 L443.5 212.0 L450.7 216.8" class="md"/>
<path d="M480.0 212.0 L498.0 208.0 L510.0 203.0 L530.0 201.0 L545.0 204.0" class="md"/>
<path d="M34.2 322.2 L60.0 322.0 L91.0 319.2 L108.0 318.6 L127.0 322.8 L160.0 320.4" class="md"/>
<path d="M597.0 33.6 L638.0 34.5" class="md"/>
<path d="M596.3 33.6 L596.0 61.2 L589.0 63.0 L588.5 68.6" class="md"/>
<path d="M531.6 68.6 L588.5 68.6" class="md"/>
<path d="M242.7 221.6 L229.5 234.8 L214.0 243.0 L209.0 248.0 L209.0 262.4 L206.0 273.0 L196.0 294.7" class="md"/>
<path d="M178.0 288.7 L184.0 294.7 L199.6 300.0" class="md"/>
<path d="M178.0 288.7 L176.0 280.0 L184.0 273.0" class="md"/>
<path d="M292.0 279.0 L293.0 288.7 L298.0 300.0" class="md"/>
<path d="M301.5 272.0 L300.3 288.7 L304.0 300.0" class="md"/>
<path d="M305.7 267.0 L304.0 275.0" class="md"/>
<path d="M49.0 366.0 L76.7 365.6" class="md"/>
<path d="M94.7 365.0 L116.3 364.0" class="md"/>
<path d="M295.5 362.4 L288.3 376.7 L275.0 394.7 L272.0 400.0" class="md"/>
<path d="M301.5 363.5 L304.0 374.3 L314.7 387.5 L320.0 391.0 L330.0 396.0" class="md"/>
<path d="M320.0 350.4 L313.5 352.8 L306.0 358.0" class="md"/>
<path d="M272.7 366.5 L280.0 363.5 L290.0 358.0" class="md"/>
<path d="M298.0 300.0 L299.0 334.8 L298.0 350.4" class="md"/>
<path d="M308.7 308.4 L314.7 307.2 L318.3 300.0" class="md"/>
<path d="M444.7 350.4 L445.3 370.7 L454.3 385.0 L474.7 400.0" class="md"/>
<path d="M630.0 182.7 L640.0 181.0" class="md"/>
<path d="M631.0 273.0 L640.0 269.0" class="md"/>
<path d="M130.1 0.0 L130.7 60.0 L145.1 60.6 L145.1 89.3 L137.9 89.9 L137.3 100.0 L137.0 107.0 L129.0 124.0 L129.0 151.6 L118.7 172.0 L120.0 176.7 L122.3 200.0" class="hw"/>
<path d="M159.5 0.0 L159.7 30.0 L173.2 58.8 L173.8 72.0 L187.6 72.9 L187.8 100.0 L209.0 108.0 L212.2 115.6 L208.0 126.4 L208.0 134.2 L222.4 152.8 L239.1 158.2 L250.5 167.1 L251.7 174.3 L247.0 186.3 L245.7 200.0" class="hw"/>
<path d="M54.0 104.8 L62.4 105.4 L72.0 114.4 L120.0 111.4 L127.0 113.2 L137.0 116.0 L154.7 121.6 L164.8 120.4 L175.6 107.8 L187.8 100.0" class="hw"/>
<path d="M187.8 100.0 L197.8 100.0 L198.4 90.0 L208.0 82.1 L235.5 80.6 L252.3 84.5 L264.3 91.7 L285.9 88.1 L320.0 87.5 L348.8 88.7" class="hw"/>
<path d="M362.0 66.5 L371.6 68.3 L384.7 70.7 L396.7 83.9 L404.0 100.0" class="hw"/>
<path d="M371.6 68.3 L373.4 81.5 L378.8 88.7 L377.6 100.0 L375.2 118.0 L369.2 129.4" class="hw"/>
<path d="M530.7 0.0 L530.5 48.0 L529.8 67.0 L535.2 81.5 L538.8 90.0 L538.2 107.2 L543.5 120.4 L544.7 136.0" class="hw"/>
<path d="M638.3 0.0 L638.3 34.8 L631.3 43.2 L632.3 107.2 L637.0 115.6 L637.7 160.0 L637.0 200.0 L636.0 234.8 L636.0 251.6 L630.0 261.0 L628.0 272.0 L628.7 292.3 L632.3 300.0 L636.0 312.0 L636.0 318.6 L640.0 319.0" class="hw"/>
<path d="M125.3 205.0 L127.0 212.0 L127.7 224.0 L124.0 233.6 L124.0 257.6 L127.7 264.7 L128.0 332.4 L140.3 374.3 L142.0 400.0" class="hw"/>
<path d="M21.0 251.6 L45.6 257.0 L67.0 255.0 L100.7 249.0 L111.5 249.0 L127.0 262.4 L134.3 264.7 L153.5 268.3 L167.2 275.5 L184.0 273.0 L206.8 273.7 L220.0 277.3 L239.0 278.5 L295.5 279.0" class="hw"/>
<path d="M242.7 204.0 L242.7 221.6 L257.1 242.0 L264.3 257.6 L274.0 263.5 L283.5 273.0 L285.3 278.0" class="hw"/>
<path d="M345.8 276.7 L353.6 273.0 L359.6 272.5 L365.6 269.0 L389.5 265.7 L394.3 269.5 L412.3 271.3 L426.7 275.0 L438.7 275.5 L442.3 272.0 L457.9 273.0 L480.0 268.3 L495.6 266.5 L507.6 263.0 L526.8 258.8 L536.4 257.3 L547.0 264.0 L562.7 261.0 L588.0 264.7 L592.7 267.0 L607.0 267.7 L624.0 273.0 L631.0 273.0" class="hw"/>
<path d="M565.0 200.0 L565.0 236.0 L571.0 243.0 L571.7 250.4 L571.7 300.0 L570.0 303.6 L562.7 315.6 L559.7 331.0 L559.7 340.8 L564.0 346.0 L569.3 350.4 L568.7 357.6 L563.3 368.3 L563.3 400.0" class="hw"/>
<path d="M199.6 300.0 L210.4 307.2 L222.4 311.4 L236.7 312.0 L253.5 321.0 L268.0 332.4 L277.5 340.8 L286.0 346.8 L292.0 351.6" class="hw"/>
<path d="M160.0 398.3 L179.2 392.3 L199.6 381.5 L212.8 363.5 L218.8 358.8 L252.3 358.8 L259.5 363.0 L268.0 366.5" class="hw"/>
<path d="M304.0 334.2 L305.7 339.6 L305.0 348.0" class="hw"/>
<path d="M304.0 334.2 L310.0 312.0 L308.7 307.2 L302.7 300.0" class="hw"/>
<path d="M320.0 349.8 L327.0 348.6 L335.6 345.6 L368.0 346.0 L383.5 353.4 L416.0 353.4 L444.7 350.4 L467.5 345.3 L480.0 346.0" class="hw"/>
<path d="M640.0 336.0 L627.5 345.6 L591.5 366.0 L582.0 370.7 L577.0 385.0 L575.0 400.0" class="hw"/>
<path d="M583.0 176.7 L592.7 178.0 L606.0 184.0 L630.0 182.7 L640.0 181.0" class="f2o"/>
<path d="M353.6 200.0 L348.8 212.0 L333.2 228.8 L322.0 238.0 L310.0 258.0 L304.0 269.5 L301.5 279.0 L300.3 303.0 L301.0 325.0 L303.0 334.2 L288.3 334.2 L278.7 339.6 L272.7 348.0 L269.7 356.4 L268.5 378.0 L272.0 393.5 L270.3 400.0" class="f2o"/>
<path d="M583.0 176.7 L592.7 178.0 L606.0 184.0 L630.0 182.7 L640.0 181.0" class="f2i"/>
<path d="M353.6 200.0 L348.8 212.0 L333.2 228.8 L322.0 238.0 L310.0 258.0 L304.0 269.5 L301.5 279.0 L300.3 303.0 L301.0 325.0 L303.0 334.2 L288.3 334.2 L278.7 339.6 L272.7 348.0 L269.7 356.4 L268.5 378.0 L272.0 393.5 L270.3 400.0" class="f2i"/>
<path d="M123.5 0.0 L104.3 16.8 L91.1 29.4 L73.1 45.6 L64.7 57.6 L61.2 67.1 L55.2 74.9 L39.6 82.7 L20.4 91.1 L7.2 99.5 L0.0 104.0" class="fwo"/>
<path d="M0.0 178.0 L44.4 175.3 L54.0 177.3 L160.0 175.5 L205.6 175.0 L212.8 176.7 L256.0 196.0 L264.3 198.3 L320.0 199.0 L354.0 199.5 L464.0 200.6 L471.0 203.6 L480.0 210.8 L486.0 214.0 L495.6 215.3 L564.0 216.2 L571.0 218.0 L590.3 226.4 L601.0 231.8 L640.0 234.0" class="fwo"/>
<path d="M0.0 264.7 L12.0 273.0 L39.6 286.3 L52.8 287.0 L69.5 288.7 L76.7 292.3 L86.3 300.0 L108.0 322.8 L110.3 333.6 L117.5 351.6 L118.0 374.3 L129.5 398.3 L131.0 400.0" class="fwo"/>
<path d="M373.6 0.0 L373.6 12.0 L374.6 30.0 L370.4 48.0 L360.8 62.4 L359.0 69.5 L350.0 76.7 L349.0 100.0 L349.4 114.4 L359.6 127.0 L370.4 131.8 L373.4 137.2 L372.8 151.6 L356.0 182.7 L353.6 191.0 L354.0 199.0" class="fwo"/>
<path d="M400.3 100.0 L406.3 103.6 L460.3 133.6 L477.0 136.0 L489.6 146.8 L504.0 150.4 L508.8 140.8 L513.6 137.2 L529.2 135.7 L552.0 138.4 L558.5 143.2 L559.7 150.4 L558.5 190.0 L566.3 200.0" class="fwo"/>
<path d="M123.5 0.0 L104.3 16.8 L91.1 29.4 L73.1 45.6 L64.7 57.6 L61.2 67.1 L55.2 74.9 L39.6 82.7 L20.4 91.1 L7.2 99.5 L0.0 104.0" class="fwi"/>
<path d="M0.0 178.0 L44.4 175.3 L54.0 177.3 L160.0 175.5 L205.6 175.0 L212.8 176.7 L256.0 196.0 L264.3 198.3 L320.0 199.0 L354.0 199.5 L464.0 200.6 L471.0 203.6 L480.0 210.8 L486.0 214.0 L495.6 215.3 L564.0 216.2 L571.0 218.0 L590.3 226.4 L601.0 231.8 L640.0 234.0" class="fwi"/>
<path d="M0.0 264.7 L12.0 273.0 L39.6 286.3 L52.8 287.0 L69.5 288.7 L76.7 292.3 L86.3 300.0 L108.0 322.8 L110.3 333.6 L117.5 351.6 L118.0 374.3 L129.5 398.3 L131.0 400.0" class="fwi"/>
<path d="M373.6 0.0 L373.6 12.0 L374.6 30.0 L370.4 48.0 L360.8 62.4 L359.0 69.5 L350.0 76.7 L349.0 100.0 L349.4 114.4 L359.6 127.0 L370.4 131.8 L373.4 137.2 L372.8 151.6 L356.0 182.7 L353.6 191.0 L354.0 199.0" class="fwi"/>
<path d="M400.3 100.0 L406.3 103.6 L460.3 133.6 L477.0 136.0 L489.6 146.8 L504.0 150.4 L508.8 140.8 L513.6 137.2 L529.2 135.7 L552.0 138.4 L558.5 143.2 L559.7 150.4 L558.5 190.0 L566.3 200.0" class="fwi"/>
<rect x="122.8" y="16.3" width="15.4" height="13" rx="6.5" fill="#fff" stroke="#3c3c3c" stroke-width="0.9"/>
<text class="sh" x="130.5" y="25.9">73</text>
<rect x="152.3" y="6.7" width="15.4" height="13" rx="6.5" fill="#fff" stroke="#3c3c3c" stroke-width="0.9"/>
<text class="sh" x="160" y="16.3">89</text>
<rect x="235.6" y="74.1" width="15.4" height="13" rx="6.5" fill="#fff" stroke="#3c3c3c" stroke-width="0.9"/>
<text class="sh" x="243.3" y="83.7">19</text>
<rect x="365.1" y="-1.5" width="15.4" height="13" rx="6.5" fill="#fff" stroke="#3c3c3c" stroke-width="0.9"/>
<text class="sh" x="372.8" y="8.1">26</text>
<rect x="383.6" y="69.3" width="15.4" height="13" rx="6.5" fill="#fff" stroke="#3c3c3c" stroke-width="0.9"/>
<text class="sh" x="391.3" y="78.9">16</text>
<rect x="523.6" y="15.5" width="15.4" height="13" rx="6.5" fill="#fff" stroke="#3c3c3c" stroke-width="0.9"/>
<text class="sh" x="531.3" y="25.1">67</text>
<rect x="623.6" y="52.3" width="15.4" height="13" rx="6.5" fill="#fff" stroke="#3c3c3c" stroke-width="0.9"/>
<text class="sh" x="631.3" y="61.9">83</text>
<rect x="221.8" y="150.2" width="15.4" height="13" rx="6.5" fill="#fff" stroke="#3c3c3c" stroke-width="0.9"/>
<text class="sh" x="229.5" y="159.8">89</text>
<rect x="344.7" y="114.5" width="15.4" height="13" rx="6.5" fill="#fff" stroke="#3c3c3c" stroke-width="0.9"/>
<text class="sh" x="352.4" y="124.1">26</text>
<rect x="512.8" y="127.5" width="15.4" height="13" rx="6.5" fill="#fff" stroke="#3c3c3c" stroke-width="0.9"/>
<text class="sh" x="520.5" y="137.1">16</text>
<rect x="117.6" y="198.5" width="15.4" height="13" rx="6.5" fill="#fff" stroke="#3c3c3c" stroke-width="0.9"/>
<text class="sh" x="125.3" y="208.1">73</text>
<rect x="252.8" y="243.5" width="15.4" height="13" rx="6.5" fill="#fff" stroke="#3c3c3c" stroke-width="0.9"/>
<text class="sh" x="260.5" y="253.1">89</text>
<rect x="133.8" y="375.5" width="15.4" height="13" rx="6.5" fill="#fff" stroke="#3c3c3c" stroke-width="0.9"/>
<text class="sh" x="141.5" y="385.1">73</text>
<rect x="552.9" y="317.5" width="15.4" height="13" rx="6.5" fill="#fff" stroke="#3c3c3c" stroke-width="0.9"/>
<text class="sh" x="560.6" y="327.1">67</text>
<rect x="344.0" y="339.3" width="21" height="13.4" rx="6.7" fill="#fff" stroke="#3c3c3c" stroke-width="0.9"/>
<text class="sh" x="354.5" y="349.1">106</text>
<path d="M74.3 29.4 Q77.8 31.4 81.5 29.4 Q85.2 31.4 88.7 29.4 L91.5 32.0 Q89.9 35.4 91.7 39.4 Q91.5 43.8 82.7 44.8 L81.5 45.6 L80.3 44.8 Q71.5 43.8 71.3 39.4 Q73.1 35.4 71.5 32.0 Z" fill="#fff" stroke="#3c3c3c" stroke-width="0.9" stroke-linejoin="round"/>
<text class="sh" x="81.5" y="40.6">151</text>
<path d="M4.9 240.3 Q8.1 242.3 11.4 240.3 Q14.7 242.3 17.9 240.3 L20.4 242.9 Q19.0 246.3 20.6 250.3 Q20.4 254.7 12.6 255.7 L11.4 256.5 L10.2 255.7 Q2.4 254.7 2.2 250.3 Q3.8 246.3 2.4 242.9 Z" fill="#fff" stroke="#3c3c3c" stroke-width="0.9" stroke-linejoin="round"/>
<text class="sh" x="11.4" y="251.5">18</text>
<path d="M136.8 257.3 Q140.0 259.3 143.3 257.3 Q146.6 259.3 149.8 257.3 L152.3 259.9 Q150.9 263.3 152.5 267.3 Q152.3 271.7 144.5 272.7 L143.3 273.5 L142.1 272.7 Q134.3 271.7 134.1 267.3 Q135.7 263.3 134.3 259.9 Z" fill="#fff" stroke="#3c3c3c" stroke-width="0.9" stroke-linejoin="round"/>
<text class="sh" x="143.3" y="268.5">18</text>
<path d="M223.0 270.5 Q226.2 272.5 229.5 270.5 Q232.8 272.5 236.0 270.5 L238.5 273.1 Q237.1 276.5 238.7 280.5 Q238.5 284.9 230.7 285.9 L229.5 286.7 L228.3 285.9 Q220.5 284.9 220.3 280.5 Q221.9 276.5 220.5 273.1 Z" fill="#fff" stroke="#3c3c3c" stroke-width="0.9" stroke-linejoin="round"/>
<text class="sh" x="229.5" y="281.7">18</text>
<path d="M396.0 265.4 Q399.2 267.4 402.5 265.4 Q405.8 267.4 409.0 265.4 L411.5 268.0 Q410.1 271.4 411.7 275.4 Q411.5 279.8 403.7 280.8 L402.5 281.6 L401.3 280.8 Q393.5 279.8 393.3 275.4 Q394.9 271.4 393.5 268.0 Z" fill="#fff" stroke="#3c3c3c" stroke-width="0.9" stroke-linejoin="round"/>
<text class="sh" x="402.5" y="276.6">18</text>
<path d="M510.9 251.4 Q514.1 253.39999999999998 517.4 251.4 Q520.7 253.39999999999998 523.9 251.4 L526.4 254.0 Q525.0 257.4 526.6 261.4 Q526.4 265.8 518.6 266.8 L517.4 267.6 L516.2 266.8 Q508.4 265.8 508.2 261.4 Q509.8 257.4 508.4 254.0 Z" fill="#fff" stroke="#3c3c3c" stroke-width="0.9" stroke-linejoin="round"/>
<text class="sh" x="517.4" y="262.6">18</text>
<path d="M78.9 357.3 Q82.1 359.3 85.4 357.3 Q88.7 359.3 91.9 357.3 L94.4 359.9 Q93.0 363.3 94.6 367.3 Q94.4 371.7 86.6 372.7 L85.4 373.5 L84.2 372.7 Q76.4 371.7 76.2 367.3 Q77.8 363.3 76.4 359.9 Z" fill="#fff" stroke="#3c3c3c" stroke-width="0.9" stroke-linejoin="round"/>
<text class="sh" x="85.4" y="368.5">51</text>
<rect x="53.05" y="281.5" width="15" height="2" fill="#fff"/>
<path d="M53.15 281.9 L53.15 280.2 L54.25 279.1 L56.55 280.6 L58.25 280.2 L60.55 278.8 L62.849999999999994 280.2 L64.55 280.6 L66.85 279.1 L67.95 280.2 L67.95 281.9 Z" fill="#dc4a4c"/>
<path d="M53.05 282.9 L68.05 282.9 L68.05 287.2 Q67.55 291.7 60.55 295.0 Q53.55 291.7 53.05 287.2 Z" fill="#316ac9"/>
<text x="60.55" y="290.8" font-size="8.8" font-weight="bold" fill="#fff" text-anchor="middle">90</text>
<rect x="288.8" y="193.6" width="15" height="2" fill="#fff"/>
<path d="M288.90000000000003 194.0 L288.90000000000003 192.3 L290.0 191.2 L292.3 192.7 L294.0 192.3 L296.3 190.9 L298.6 192.3 L300.3 192.7 L302.6 191.2 L303.7 192.3 L303.7 194.0 Z" fill="#dc4a4c"/>
<path d="M288.8 195.0 L303.8 195.0 L303.8 199.3 Q303.3 203.8 296.3 207.1 Q289.3 203.8 288.8 199.3 Z" fill="#316ac9"/>
<text x="296.3" y="202.9" font-size="8.8" font-weight="bold" fill="#fff" text-anchor="middle">94</text>
<rect x="-10.1" y="176.9" width="15" height="2" fill="#fff"/>
<path d="M-10.0 177.3 L-10.0 175.6 L-8.9 174.5 L-6.6 176.0 L-4.9 175.6 L-2.6 174.2 L-0.30000000000000027 175.6 L1.4 176.0 L3.6999999999999997 174.5 L4.800000000000001 175.6 L4.800000000000001 177.3 Z" fill="#dc4a4c"/>
<path d="M-10.1 178.3 L4.9 178.3 L4.9 182.6 Q4.4 187.1 -2.6 190.4 Q-9.6 187.1 -10.1 182.6 Z" fill="#316ac9"/>
<text x="-2.6" y="186.2" font-size="8.8" font-weight="bold" fill="#fff" text-anchor="middle">94</text>
<text class="lb" x="39.6" y="22.2" textLength="59.9" lengthAdjust="spacing">East Bristol</text>
<text class="lb" x="192.4" y="61.8" textLength="44.3" lengthAdjust="spacing">Portland</text>
<text class="lb" x="312.3" y="48.6" textLength="51.5" lengthAdjust="spacing">Richwood</text>
<text class="lb" x="429.7" y="34.8" textLength="44.7" lengthAdjust="spacing">Lebanon</text>
<text class="lb" x="349.4" y="94.7" textLength="56.9" lengthAdjust="spacing">Watertown</text>
<text class="lb" x="508.2" y="76.7" textLength="49.8" lengthAdjust="spacing">Ashippun</text>
<text class="lb" x="108.5" y="122.0" textLength="45.5" lengthAdjust="spacing">Marshall</text>
<text class="lb" x="165.2" y="105.6" textLength="47.8" lengthAdjust="spacing">Waterloo</text>
<text class="lb" x="457.9" y="145.6" textLength="30.5" lengthAdjust="spacing">Ixonia</text>
<text class="lb" x="508.4" y="178.5" textLength="72.9" lengthAdjust="spacing">Oconomowoc</text>
<text class="lb" x="101.7" y="238.0" textLength="46.6" lengthAdjust="spacing">Deerfield</text>
<text class="lb" x="139.7" y="285.7" textLength="57.3" lengthAdjust="spacing">Cambridge</text>
<text class="lb" x="217.6" y="208.6" textLength="52.7" lengthAdjust="spacing">Lake Mills</text>
<text class="lb" x="295.5" y="284.2" textLength="49.9" lengthAdjust="spacing">Jefferson</text>
<text class="lb" x="450.7" y="220.2" textLength="43.7" lengthAdjust="spacing">Concord</text>
<text class="lb" x="459.0" y="276.9" textLength="40.8" lengthAdjust="spacing">Sullivan</text>
<text class="lb" x="534.6" y="248.6" textLength="40.7" lengthAdjust="spacing">Summit</text>
<text class="lb" x="591.8" y="230.0" textLength="45.2" lengthAdjust="spacing">Delafield</text>
<text class="lb" x="539.7" y="278.5" textLength="49.7" lengthAdjust="spacing">Dousman</text>
<text class="lb" x="133.7" y="318.0" textLength="48.3" lengthAdjust="spacing">Rockdale</text>
<text class="lb" x="159.6" y="390.0" textLength="58.8" lengthAdjust="spacing">Busseyville</text>
<text class="lb" x="263.7" y="359.6" textLength="70.3" lengthAdjust="spacing">Fort Atkinson</text>
<text class="lb" x="433.3" y="309.6" textLength="30.6" lengthAdjust="spacing">Rome</text>
<text class="lb" x="385.7" y="363.5" textLength="37.7" lengthAdjust="spacing">Hebron</text>
<text class="lb" x="314.7" y="397.6" textLength="60.3" lengthAdjust="spacing">Cold Spring</text>
<text class="lb" x="52.8" y="106.6" text-anchor="end">Sun Prairie</text>
<text class="lb" x="69.0" y="124.0" text-anchor="end">Buss's Corners</text>
<text class="lb" x="72.8" y="214.0" text-anchor="end">Cottage Grove</text>
<text class="lb" x="-6.4" y="372" textLength="54.7" lengthAdjust="spacing">Stoughton</text>
<text class="lb" x="632.9" y="184.0">Hartland</text>
<text class="lb" x="612.5" y="284.2">Wales</text>
<text class="lb" x="579.5" y="356.4">North Prairie</text>
<path d="M316.8 199.6 L330.4 227 L303.2 227 Z" fill="#ea4335"/>
<ellipse cx="317.2" cy="246" rx="22" ry="21.4" fill="#fff" stroke="#ea4335" stroke-width="2.8"/>
<rect x="304.6" y="242" width="25.2" height="6.3" fill="#000"/>
<rect x="384" y="385.4" width="256" height="14.6" fill="#f3f8f3" fill-opacity="0.75"/>
<g font-size="9.8" fill="#222"><text x="388.6" y="394.7" textLength="108.5">Map data ©2025 Google</text><text x="510" y="394.7" textLength="27.3">Terms</text><text x="549.8" y="394.7" textLength="82.8">Report a map error</text></g>
<circle cx="609" cy="355.6" r="20.3" fill="#7fae93" fill-opacity="0.25"/><circle cx="609" cy="355" r="19.5" fill="#fff"/>
<g fill="none" stroke="#666" stroke-width="2.1" stroke-linejoin="miter"><path d="M604.8 347.3 L609 343.1 L613.2 347.3"/><path d="M604.8 362.7 L609 366.9 L613.2 362.7"/><path d="M601.3 350.8 L597.1 355 L601.3 359.2"/><path d="M616.7 350.8 L620.9 355 L616.7 359.2"/></g>
<text x="11.2" y="390.6" font-size="17.6" font-weight="bold" fill="#fff" stroke="#75877f" stroke-opacity="0.75" stroke-width="1.5" paint-order="stroke fill" textLength="56.4" lengthAdjust="spacingAndGlyphs">Google</text>
<rect x="0.5" y="0.5" width="639" height="399" stroke="#cfcde2" stroke-width="1" fill="none"/>
</svg></div>

<div class="dot" style="left:706px;top:351px;width:460px"></div>
<div id="lbox" class="abs"></div>
<div class="dot" style="left:717px;top:401px;width:439px"></div>

<div class="sel" style="left:797px;top:407px;width:243px;height:30px"></div>
<svg class="abs" style="left:1026px;top:419px" width="8" height="6" viewBox="0 0 8 6"><path d="M0.5 0 L7.5 0 L4 6 Z" fill="#222"/></svg>
<div class="inp" style="left:1082px;top:407px;width:78px;height:30px"></div>

<div class="inp" style="left:797px;top:440px;width:60px;height:30px"></div>
<div class="sel" style="left:903px;top:440px;width:67px;height:30px"></div>
<svg class="abs chev" style="left:955px;top:451px" width="12" height="8" viewBox="0 0 12 8"><path d="M1.6 1.4 L6 5.8 L10.4 1.4" fill="none" stroke="#222" stroke-width="1.9"/></svg>
<div class="sel" style="left:975px;top:440px;width:185px;height:30px"></div>
<svg class="abs" style="left:1146px;top:452px" width="8" height="6" viewBox="0 0 8 6"><path d="M0.5 0 L7.5 0 L4 6 Z" fill="#222"/></svg>


<div class="abs" style="left:787px;top:530px;width:13px;height:13px;background:#fff;border:1px solid #6b6b70;border-radius:2px"></div>

<div class="dot" style="left:706px;top:591px;width:460px"></div>
<div class="sel" style="left:806px;top:602px;width:360px;height:30px"></div>
<svg class="abs" style="left:1152px;top:614px" width="8" height="6" viewBox="0 0 8 6"><path d="M0.5 0 L7.5 0 L4 6 Z" fill="#222"/></svg>
<div class="inp" style="left:806px;top:647px;width:360px;height:30px;background:#ebebeb;border-color:#b4b4b8"></div>

<div id="foot" class="abs"></div>
<div id="save" class="abs"></div>
<div id="cancel" class="abs"></div>
<span class="t" style="left:10.1px;top:5px;font-size:15.5px;line-height:20px;color:#fff;">Add Event</span>
<span class="t b" style="left:41.6px;top:59px;letter-spacing:-0.26px;">Event ID:</span>
<span class="t b" style="left:41.6px;top:83px;letter-spacing:-0.32px;">Event Type:</span>
<span class="t" style="left:120.7px;top:83px;letter-spacing:-0.06px;">Wrong Way Driver</span>
<span class="t b" style="left:414.1px;top:59px;letter-spacing:-0.15px;">Detected:</span>
<span class="t" style="left:479.9px;top:59px;letter-spacing:-0.64px;">18:15</span>
<span class="t b" style="left:414.1px;top:83px;letter-spacing:-0.09px;">Last Update (No.):</span>
<span class="t" style="left:537.0px;top:83px;letter-spacing:-0.47px;">(0)</span>
<span class="t b" style="left:786.0px;top:59px;letter-spacing:-0.07px;">Owner:</span>
<span class="t b" style="left:786.0px;top:83px;letter-spacing:-0.33px;">Created By:</span>
<span class="t b" style="left:37.4px;top:138px;letter-spacing:-0.10px;color:#111;">Primary Details</span>
<span class="t b tab" style="left:164.1px;top:138px;letter-spacing:0.14px;">Additional Info</span>
<span class="t b tab" style="left:290.6px;top:138px;letter-spacing:-0.48px;">Linked Events</span>
<span class="t b tab" style="left:406.3px;top:138px;letter-spacing:-0.75px;">Log</span>
<span class="t b tab" style="left:457.0px;top:138px;letter-spacing:-0.90px;">Response</span>
<span class="t" style="left:1137.8px;top:137px;color:#fff;">0</span>
<span class="t b blue" style="left:46.5px;top:176px;letter-spacing:-0.24px;">Details</span>
<span class="t b" style="left:84.0px;top:218px;letter-spacing:-0.80px;">Cause:</span>
<span class="t" style="left:141.2px;top:219px;letter-spacing:-0.03px;">Wrong Way Driver</span>
<span class="t b" style="left:447.2px;top:218px;letter-spacing:-0.53px;">Source:</span>
<span class="t" style="left:510.5px;top:219px;letter-spacing:-0.62px;">Camera</span>
<span class="t b" style="left:786.6px;top:211px;letter-spacing:0.20px;">Notification</span>
<span class="t b" style="left:830.2px;top:225px;letter-spacing:-0.36px;">Time:</span>
<span class="t" style="left:881.4px;top:219px;letter-spacing:-0.09px;">07/10/2025 18:15</span>
<span class="t b blue" style="left:46.5px;top:291px;letter-spacing:-0.30px;">Location</span>
<span class="t b blue" style="left:706.4px;top:326px;letter-spacing:-0.31px;">Last Known Location</span>
<span class="t b blue" style="left:717.3px;top:378px;letter-spacing:-0.24px;">Location</span>
<span class="t blue2" style="left:796.3px;top:371px;letter-spacing:-0.18px;">I-94 East 5.02 miles after Ramp from WIS 89 1.88 miles</span>
<span class="t blue2" style="left:797.3px;top:385px;letter-spacing:-0.23px;">before WIS 26</span>
<span class="t b" style="left:724.0px;top:413px;letter-spacing:-0.32px;">Roadway:</span>
<span class="t" style="left:802.6px;top:415px;letter-spacing:-0.34px;">I-94 East</span>
<span class="t b" style="left:1045.3px;top:414px;letter-spacing:0.12px;">Mile:</span>
<span class="t" style="left:1088.4px;top:415px;letter-spacing:-0.66px;">264.8</span>
<span class="t b" style="left:718.2px;top:446px;letter-spacing:-0.30px;">Reference:</span>
<span class="t" style="left:802.6px;top:448px;letter-spacing:-0.45px;">1.88</span>
<span class="t" style="left:861.6px;top:447px;letter-spacing:-0.03px;">Miles:</span>
<span class="t" style="left:907.0px;top:448px;letter-spacing:-0.19px;">Before</span>
<span class="t" style="left:981.4px;top:448px;letter-spacing:-0.64px;">WIS 26</span>
<span class="t b" style="left:744.7px;top:479px;letter-spacing:-0.45px;">Limits:</span>
<span class="t" style="left:797.3px;top:479px;letter-spacing:-0.05px;">Aztalan / Jefferson / Southwest</span>
<span class="t" style="left:806.4px;top:528px;">Direction of Travel Confirmed</span>
<span class="t b blue" style="left:706.5px;top:566px;letter-spacing:-0.27px;">Event Resolution</span>
<span class="t b" style="left:723.0px;top:609px;letter-spacing:-0.32px;">Resolution:</span>
<span class="t" style="left:812.3px;top:610px;letter-spacing:-0.66px;">Crash</span>
<span class="t b" style="left:758.3px;top:647px;letter-spacing:-0.02px;">Other</span>
<span class="t b" style="left:723.0px;top:661px;letter-spacing:-0.32px;">Resolution:</span>
<span class="t" style="left:1738.5px;top:808px;letter-spacing:-1.03px;font-size:12px;line-height:16px;color:#fff;">Save</span>
<span class="t" style="left:1794.3px;top:808px;letter-spacing:-0.50px;font-size:12px;line-height:16px;">Cancel</span>
</body>
</html>
